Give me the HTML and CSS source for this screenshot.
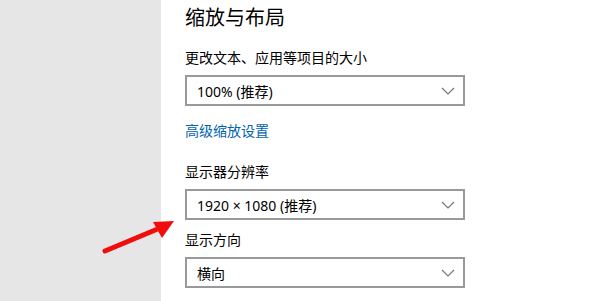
FILE: index.html
```html
<!DOCTYPE html>
<html lang="zh-CN">

<head>
    <meta charset="UTF-8">
    <meta name="viewport" content="width=device-width, initial-scale=1.0">
    <title>缩放与布局</title>
    <link rel="stylesheet" href="styles.css">
</head>

<body>

    <div class="page">
        <div class="sidebar"></div>

        <div class="content">
            <h2 class="title">缩放与布局</h2>

            <div class="setting">
                <div class="label">更改文本、应用等项目的大小</div>
                <div class="select">
                    <span>100% (推荐)</span>
                    <svg class="chevron" width="14" height="8" viewBox="0 0 14 8">
                        <path d="M1 1 L7 7 L13 1" fill="none" stroke="#777" stroke-width="1.2" />
                    </svg>
                </div>
            </div>

            <a class="link" href="#">高级缩放设置</a>

            <div class="setting resolution">
                <div class="label">显示器分辨率</div>
                <div class="select">
                    <span>1920 × 1080 (推荐)</span>
                    <svg class="chevron" width="14" height="8" viewBox="0 0 14 8">
                        <path d="M1 1 L7 7 L13 1" fill="none" stroke="#777" stroke-width="1.2" />
                    </svg>
                </div>
            </div>

            <div class="setting orientation">
                <div class="label">显示方向</div>
                <div class="select">
                    <span>横向</span>
                    <svg class="chevron" width="14" height="8" viewBox="0 0 14 8">
                        <path d="M1 1 L7 7 L13 1" fill="none" stroke="#777" stroke-width="1.2" />
                    </svg>
                </div>
            </div>
        </div>

        <!-- 标注箭头 -->
        <svg class="arrow" width="600" height="301" viewBox="0 0 600 301">
            <line x1="105" y1="251" x2="160" y2="228" stroke="#f20d0d" stroke-width="5" stroke-linecap="round" />
            <polygon points="153,222 174,221 162,238" fill="#f20d0d" />
        </svg>
    </div>

</body>

</html>
```

FILE: styles.css
```css
body {
    margin: 0;
    font-family: "Noto Sans", "Noto Sans CJK SC", sans-serif;
    color: #000;
    background: #fff;
}
.page {
    position: relative;
    display: flex;
    width: 600px;
    height: 301px;
    overflow: hidden;
}
.sidebar {
    width: 161px;
    background: #e6e6e6;
}
.content {
    padding-left: 24px;
}
.title {
    margin: 4px 0 0;
    font-size: 20px;
    font-weight: normal;
    line-height: 28px;
}
.setting {
    margin-top: 16px;
}
.setting.resolution {
    margin-top: 21px;
}
.setting.orientation {
    margin-top: 10px;
}
.label {
    font-size: 14px;
    line-height: 20px;
    margin-bottom: 7px;
}
.select {
    box-sizing: border-box;
    width: 280px;
    height: 31px;
    border: 2px solid #999;
    display: flex;
    align-items: center;
    justify-content: space-between;
    padding: 0 8px 0 10px;
    font-size: 14px;
}
.chevron {
    display: block;
}
.link {
    display: block;
    margin-top: 15px;
    font-size: 14px;
    line-height: 20px;
    color: #0063b1;
    text-decoration: none;
}
.arrow {
    position: absolute;
    left: 0;
    top: 0;
}
```
